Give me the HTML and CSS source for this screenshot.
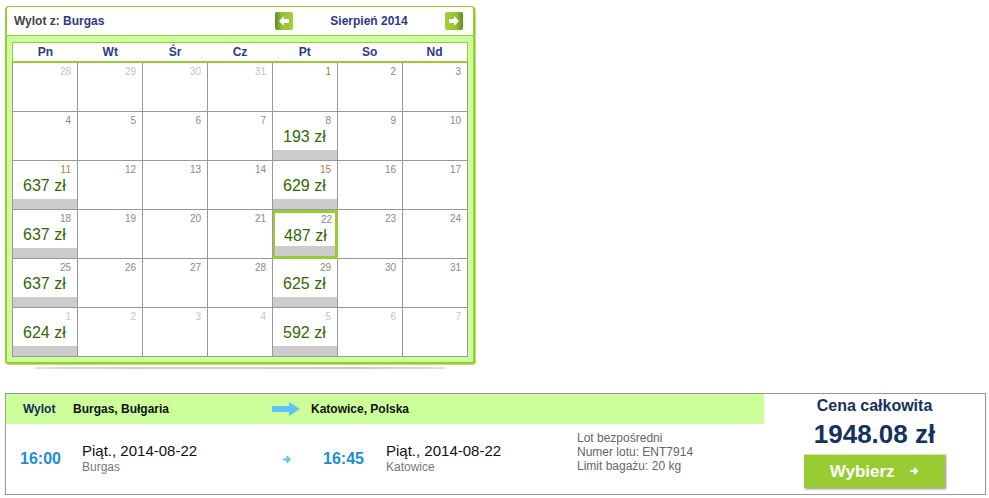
FILE: index.html
```html
<!DOCTYPE html>
<html lang="pl">
<head>
    <meta charset="UTF-8">
    <title>Wybór lotu</title>
    <link rel="stylesheet" href="styles.css">
</head>
<body>

    <!-- Calendar of fares -->
    <div class="calendar">
        <div class="cal-head">
            <div class="from">Wylot z: <span>Burgas</span></div>
            <div class="month-nav">
                <svg class="nav-btn" width="18" height="18" viewBox="0 0 18 18">
                    <defs>
                        <linearGradient id="gl" x1="0" x2="1">
                            <stop offset="0" stop-color="#5e8c22"/>
                            <stop offset="0.35" stop-color="#8fbf35"/>
                            <stop offset="1" stop-color="#a3d13c"/>
                        </linearGradient>
                    </defs>
                    <rect width="18" height="18" rx="2" fill="url(#gl)"/>
                    <polygon points="4,9 9,4 9,7 14,7 14,11 9,11 9,14" fill="#fff"/>
                </svg>
                <div class="month">Sierpień 2014</div>
                <svg class="nav-btn" width="18" height="18" viewBox="0 0 18 18">
                    <defs>
                        <linearGradient id="gr" x1="0" x2="1">
                            <stop offset="0" stop-color="#a3d13c"/>
                            <stop offset="0.65" stop-color="#8fbf35"/>
                            <stop offset="1" stop-color="#5e8c22"/>
                        </linearGradient>
                    </defs>
                    <rect width="18" height="18" rx="2" fill="url(#gr)"/>
                    <polygon points="14,9 9,4 9,7 4,7 4,11 9,11 9,14" fill="#fff"/>
                </svg>
            </div>
        </div>

        <div class="cal-body">
            <div class="weekdays">
                <div>Pn</div><div>Wt</div><div>Śr</div><div>Cz</div><div>Pt</div><div>So</div><div>Nd</div>
            </div>
            <div class="days">
                <!-- week 1 -->
                <div class="day"><span class="num other">28</span></div>
                <div class="day"><span class="num other">29</span></div>
                <div class="day"><span class="num other">30</span></div>
                <div class="day"><span class="num other">31</span></div>
                <div class="day"><span class="num first">1</span></div>
                <div class="day"><span class="num">2</span></div>
                <div class="day"><span class="num">3</span></div>
                <!-- week 2 -->
                <div class="day mark"><span class="num">4</span></div>
                <div class="day"><span class="num">5</span></div>
                <div class="day"><span class="num">6</span></div>
                <div class="day"><span class="num">7</span></div>
                <div class="day fare"><span class="num">8</span><span class="price">193 zł</span><span class="bar"></span></div>
                <div class="day"><span class="num">9</span></div>
                <div class="day"><span class="num">10</span></div>
                <!-- week 3 -->
                <div class="day fare"><span class="num hot">11</span><span class="price">637 zł</span><span class="bar"></span></div>
                <div class="day"><span class="num">12</span></div>
                <div class="day"><span class="num">13</span></div>
                <div class="day"><span class="num">14</span></div>
                <div class="day fare"><span class="num hot">15</span><span class="price">629 zł</span><span class="bar"></span></div>
                <div class="day"><span class="num">16</span></div>
                <div class="day"><span class="num">17</span></div>
                <!-- week 4 -->
                <div class="day fare"><span class="num">18</span><span class="price">637 zł</span><span class="bar"></span></div>
                <div class="day"><span class="num">19</span></div>
                <div class="day"><span class="num">20</span></div>
                <div class="day"><span class="num">21</span></div>
                <div class="day fare selected"><span class="num">22</span><span class="price">487 zł</span><span class="bar"></span></div>
                <div class="day"><span class="num">23</span></div>
                <div class="day"><span class="num">24</span></div>
                <!-- week 5 -->
                <div class="day fare"><span class="num">25</span><span class="price">637 zł</span><span class="bar"></span></div>
                <div class="day"><span class="num">26</span></div>
                <div class="day"><span class="num">27</span></div>
                <div class="day"><span class="num">28</span></div>
                <div class="day fare"><span class="num">29</span><span class="price">625 zł</span><span class="bar"></span></div>
                <div class="day"><span class="num">30</span></div>
                <div class="day"><span class="num">31</span></div>
                <!-- week 6 -->
                <div class="day fare"><span class="num other">1</span><span class="price">624 zł</span><span class="bar"></span></div>
                <div class="day"><span class="num other">2</span></div>
                <div class="day"><span class="num other">3</span></div>
                <div class="day"><span class="num other">4</span></div>
                <div class="day fare"><span class="num other">5</span><span class="price">592 zł</span><span class="bar"></span></div>
                <div class="day"><span class="num other">6</span></div>
                <div class="day"><span class="num other">7</span></div>
            </div>
        </div>
    </div>
    <div class="cal-shadow"></div>

    <!-- Selected flight summary -->
    <div class="flight">
        <div class="flight-main">
            <div class="route">
                <div class="lbl">Wylot</div>
                <div class="city">Burgas, Bułgaria</div>
                <div class="big-arrow">
                    <svg width="28" height="14" viewBox="0 0 28 14">
                        <polygon points="0,4 17,4 17,0 28,7 17,14 17,10 0,10" fill="#5bc3f5"/>
                    </svg>
                </div>
                <div class="city">Katowice, Polska</div>
            </div>
            <div class="leg">
                <div class="time dep">16:00</div>
                <div class="when dep">
                    <div class="date">Piąt., 2014-08-22</div>
                    <div class="place">Burgas</div>
                </div>
                <div class="small-arrow">
                    <svg width="9" height="9" viewBox="0 0 9 9">
                        <path d="M1 4.5H7M4.5 1.5L7.5 4.5L4.5 7.5" fill="none" stroke="#5bc3f5" stroke-width="2"/>
                    </svg>
                </div>
                <div class="time arr">16:45</div>
                <div class="when arr">
                    <div class="date">Piąt., 2014-08-22</div>
                    <div class="place">Katowice</div>
                </div>
                <div class="info">
                    Lot bezpośredni<br>
                    Numer lotu: ENT7914<br>
                    Limit bagażu: 20 kg
                </div>
            </div>
        </div>
        <div class="total">
            <div class="total-label">Cena całkowita</div>
            <div class="total-price">1948.08 zł</div>
            <button class="choose">Wybierz
                <svg width="10" height="10" viewBox="0 0 10 10">
                    <path d="M1 5H7.5M5 2L8 5L5 8" fill="none" stroke="#fff" stroke-width="2"/>
                </svg>
            </button>
        </div>
    </div>

</body>
</html>
```

FILE: styles.css
```css
/* Page */
body {
    margin: 0;
    padding: 6px 0 0 5px;
    font-family: 'Liberation Sans', Arial, sans-serif;
    background: #fff;
    color: #333;
}

/* Calendar box */
.calendar {
    width: 466px;
    border: 2px solid #99cc33;
    border-top-width: 1px;
    border-radius: 4px 4px 3px 3px;
    background: #ccff99;
    box-shadow: 1px 1px 0 #b5e07a;
}

.cal-head {
    display: flex;
    align-items: center;
    height: 28px;
    padding: 0 10px 0 7px;
    background: #fff;
    border-bottom: 1px solid #99cc33;
    border-radius: 3px 3px 0 0;
    font-size: 12px;
    font-weight: bold;
}

.from {
    flex: 1;
    color: #444;
}

.from span {
    color: #2b3990;
}

.month-nav {
    display: flex;
    align-items: center;
    width: 188px;
}

.nav-btn {
    display: block;
}

.month {
    flex: 1;
    text-align: center;
    color: #2b3990;
}

.cal-body {
    padding: 6px 5px 5px 5px;
}

/* Weekday names */
.weekdays {
    display: grid;
    grid-template-columns: repeat(7, 1fr);
    width: 454px;
    height: 18px;
    border: 1px solid #99cc33;
    border-bottom-width: 2px;
    background: #fff;
    line-height: 18px;
    font-size: 12px;
    font-weight: bold;
    color: #2b3990;
    text-align: center;
}

/* Day grid */
.days {
    display: grid;
    grid-template-columns: repeat(7, 65px);
    width: 455px;
    border-left: 1px solid #999;
    background: #fff;
}

.day {
    display: flex;
    flex-direction: column;
    height: 49px;
    box-sizing: border-box;
    border-right: 1px solid #999;
    border-bottom: 1px solid #999;
}

.day.mark {
    box-shadow: inset 1px 0 0 #ffff99;
}

.num {
    align-self: flex-end;
    padding: 4px 6px 0 0;
    font-size: 10px;
    line-height: 10px;
    color: #8a8a8a;
}

.num.other {
    color: #c4c4c4;
}

.num.first {
    color: #6f9a2a;
}

.num.hot {
    color: #c0783a;
}

.price {
    padding-left: 10px;
    margin-top: 1px;
    font-size: 16px;
    line-height: 20px;
    color: #2f6a00;
}

.bar {
    margin-top: auto;
    height: 10px;
    background: #ccc;
}

.day.selected {
    border: 3px solid #99cc33;
    border-left-width: 2px;
}

.day.selected .num {
    padding: 2px 3px 0 0;
}

.day.selected .price {
    padding-left: 9px;
}

.cal-shadow {
    width: 410px;
    height: 2px;
    margin: 3px 0 0 30px;
    background: linear-gradient(to right, #e2e2e2, #cfcfcf 20%, #c8c8c8 80%, #e2e2e2);
}

/* Flight summary */
.flight {
    display: flex;
    width: 979px;
    height: 100px;
    margin-top: 24px;
    border: 1px solid #999;
    box-shadow: 0 1px 1px #ccc;
}

.flight-main {
    width: 758px;
}

.route {
    display: flex;
    align-items: center;
    height: 30px;
    background: #ccff99;
    font-size: 12px;
    font-weight: bold;
    color: #111;
}

.route .lbl {
    width: 50px;
    padding-left: 17px;
    color: #1a2a5a;
}

.route .city {
    width: 199px;
}

.big-arrow {
    width: 39px;
    display: flex;
    align-items: center;
}

.big-arrow svg {
    display: block;
}

.leg {
    display: flex;
    align-items: center;
    height: 70px;
    padding-left: 14px;
}

.time {
    font-size: 16px;
    font-weight: bold;
    color: #1b8ed6;
}

.time.dep {
    width: 62px;
}

.time.arr {
    width: 63px;
}

.when {
    margin-top: -2px;
}

.when.dep {
    width: 200px;
}

.when.arr {
    width: 191px;
}

.date {
    font-size: 15px;
    line-height: 18px;
    color: #111;
}

.place {
    font-size: 12px;
    line-height: 14px;
    color: #777;
}

.small-arrow {
    width: 41px;
}

.small-arrow svg {
    display: block;
}

.info {
    font-size: 12px;
    line-height: 14px;
    color: #666;
    margin-top: -14px;
}

/* Total price */
.total {
    flex: 1;
    text-align: center;
    color: #15315f;
}

.total-label {
    margin-top: 3px;
    font-size: 16px;
    font-weight: bold;
}

.total-price {
    margin-top: 4px;
    font-size: 26px;
    line-height: 30px;
    font-weight: bold;
}

.choose {
    width: 141px;
    height: 34px;
    margin: 5px auto 0;
    display: block;
    border: none;
    border-top: 1px solid #d9ef8c;
    background: #99cc33;
    box-shadow: 1px 1px 2px #8a8a8a;
    color: #fff;
    font-family: 'Liberation Sans', Arial, sans-serif;
    font-size: 17px;
    font-weight: bold;
    cursor: pointer;
}

.choose svg {
    margin-left: 10px;
    vertical-align: 1px;
}
```
